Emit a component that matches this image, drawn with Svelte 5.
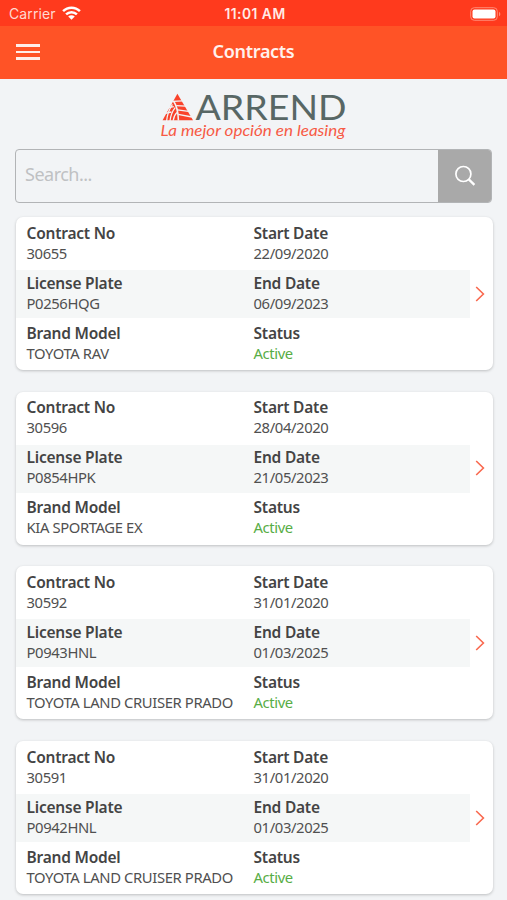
<script lang="ts">
  interface Contract {
    no: string;
    plate: string;
    model: string;
    start: string;
    end: string;
    status: string;
  }

  const contracts: Contract[] = [
    { no: '30655', plate: 'P0256HQG', model: 'TOYOTA RAV', start: '22/09/2020', end: '06/09/2023', status: 'Active' },
    { no: '30596', plate: 'P0854HPK', model: 'KIA SPORTAGE EX', start: '28/04/2020', end: '21/05/2023', status: 'Active' },
    { no: '30592', plate: 'P0943HNL', model: 'TOYOTA LAND CRUISER PRADO', start: '31/01/2020', end: '01/03/2025', status: 'Active' },
    { no: '30591', plate: 'P0942HNL', model: 'TOYOTA LAND CRUISER PRADO', start: '31/01/2020', end: '01/03/2025', status: 'Active' },
  ];

  let query = $state('');
  const visible = $derived(
    contracts.filter((c) => Object.values(c).some((v) => v.toLowerCase().includes(query.toLowerCase())))
  );
</script>

{#snippet field(label: string, value: string, active = false)}
  <div class="field">
    <dt>{label}</dt>
    <dd class:active>{value}</dd>
  </div>
{/snippet}

<div class="screen">
  <div class="status-bar">
    <div class="carrier">
      <span>Carrier</span>
      <svg width="19" height="14" viewBox="0 0 19 14" aria-hidden="true">
        <g fill="none" stroke="#fff" stroke-width="2.5">
          <path d="M1.1 5.2C5.8.5 13.2.5 17.9 5.2" />
          <path d="M4.1 8.4c3-3 7.8-3 10.8 0" />
        </g>
        <path d="M6.2 10.5c1.9-1.8 4.7-1.8 6.6 0L9.5 13.8z" fill="#fff" />
      </svg>
    </div>
    <span class="time">11:01 AM</span>
    <svg class="battery" width="31" height="14" viewBox="0 0 31 14" aria-hidden="true">
      <rect x=".7" y=".7" width="26.6" height="12.6" rx="3.6" fill="none" stroke="#ff8a76" />
      <rect x="2.5" y="2.5" width="23" height="9" rx="2" fill="#fff" />
      <path d="M29 4.7c1.8.8 1.8 3.8 0 4.6z" fill="#ff8a76" />
    </svg>
  </div>

  <header class="nav">
    <button class="menu" type="button" aria-label="Menu">
      <span></span><span></span><span></span>
    </button>
    <h1>Contracts</h1>
  </header>

  <div class="logo">
    <svg width="190" height="55" viewBox="0 0 190 55" role="img" aria-label="Arrend">
      <path d="M18.4 6.8L34 33.2H3.6z" fill="#f9432b" />
      <g fill="none" stroke="#f2f4f6" stroke-width="1.3">
        <path d="M14.6 14.2c3.2 4.4 4.6 11 4.8 19.4" stroke-width="1.6" />
        <path d="M14 14.4l9.4-.5" />
        <path d="M17.2 18.6l9.8.6" />
        <path d="M18.4 22.8l11.2 1.6" />
        <path d="M19.2 27.4l13.6 2.6" />
        <path d="M9 20.6l5.8-.9" />
        <path d="M13.4 17.4C10.4 22 8.2 27.6 7.6 34" />
        <path d="M16.2 20.6C13.4 24 11.6 28.6 11 34" />
        <path d="M18 25.4c-2 2-3.4 4.8-3.8 8.4" />
        <path d="M6.4 26.4l6-1.4" />
      </g>
      <text class="brand" x="36.5" y="33.4" textLength="151" lengthAdjust="spacingAndGlyphs">ARREND</text>
      <text class="slogan" x="1.5" y="48.8" textLength="185" lengthAdjust="spacingAndGlyphs">La mejor opción en leasing</text>
    </svg>
  </div>

  <form class="search" onsubmit={(e) => e.preventDefault()}>
    <input type="text" placeholder="Search..." bind:value={query} />
    <button type="submit" aria-label="Search">
      <svg width="22" height="22" viewBox="0 0 22 22" fill="none" stroke="#fff" aria-hidden="true">
        <circle cx="9.4" cy="9" r="7.5" stroke-width="1.7" />
        <path d="M14.8 14.4l5.6 5.4" stroke-width="2.3" />
      </svg>
    </button>
  </form>

  <main class="list">
    {#each visible as c (c.no)}
      <article class="card">
        <dl>
          <div class="row">
            {@render field('Contract No', c.no)}
            {@render field('Start Date', c.start)}
          </div>
          <div class="row shaded">
            {@render field('License Plate', c.plate)}
            {@render field('End Date', c.end)}
          </div>
          <div class="row">
            {@render field('Brand Model', c.model)}
            {@render field('Status', c.status, c.status === 'Active')}
          </div>
        </dl>
        <svg class="chevron" width="10" height="16" viewBox="0 0 10 16" fill="none" stroke="#f9694f" stroke-width="1.6" aria-hidden="true">
          <path d="M1.2 1l7.2 7-7.2 7" />
        </svg>
      </article>
    {/each}
  </main>
</div>

<style>
  :global(body) {
    margin: 0;
    background: #f2f4f6;
  }
  .screen {
    box-sizing: border-box;
    height: 900px;
    overflow: hidden;
    background: #f2f4f6;
    color: #444;
    font-family: 'Noto Sans', 'Open Sans', sans-serif;
  }

  /* Status bar */
  .status-bar {
    display: grid;
    grid-template-columns: 1fr auto 1fr;
    align-items: center;
    box-sizing: border-box;
    height: 26px;
    padding: 1px 6px 0 9px;
    background: #ff3a1d;
    color: #fff;
    font-family: Inter, sans-serif;
    font-size: 14px;
  }
  .carrier {
    display: flex;
    align-items: center;
    gap: 6px;
    color: #ffd9d1;
    letter-spacing: 0.1px;
  }
  .carrier svg { margin-top: -1px; }
  .time {
    font-size: 13.8px;
    font-weight: 600;
    letter-spacing: 0.5px;
    color: #ffeae5;
  }
  .battery { justify-self: end; }

  /* Navigation */
  .nav {
    display: grid;
    grid-template-columns: 1fr auto 1fr;
    align-items: center;
    box-sizing: border-box;
    height: 53px;
    padding: 0 16px 3px;
    background: #ff5326;
  }
  .menu {
    display: flex;
    flex-direction: column;
    gap: 4px;
    width: 24px;
    padding: 2px 0 0;
    border: 0;
    background: none;
  }
  .menu span {
    height: 2.5px;
    background: #ffeee9;
  }
  h1 {
    margin: 0;
    color: #fff1ed;
    font-size: 18px;
    font-weight: 600;
    line-height: 26px;
    letter-spacing: -0.3px;
  }

  .logo {
    display: flex;
    justify-content: center;
    height: 70px;
    padding-top: 8px;
    box-sizing: border-box;
  }
  .logo svg { overflow: visible; }
  .brand {
    fill: #586765;
    font-family: Lato, sans-serif;
    font-size: 35px;
  }
  .slogan {
    fill: #f75a45;
    font-family: Lato, sans-serif;
    font-size: 14.5px;
    font-style: italic;
  }

  /* Search */
  .search {
    display: flex;
    box-sizing: border-box;
    height: 54px;
    margin: 0 15px;
    border: 1px solid #b2b4b6;
    border-radius: 4px;
    overflow: hidden;
  }
  .search input {
    flex: 1;
    min-width: 0;
    padding: 0 9px 4px;
    border: 0;
    outline: 0;
    background: transparent;
    color: #444;
    font: 18px 'Noto Sans', sans-serif;
    letter-spacing: -0.5px;
  }
  .search input::placeholder { color: #bfc1c3; }
  .search button {
    display: flex;
    align-items: center;
    justify-content: center;
    width: 53px;
    padding: 0;
    border: 0;
    background: #a9a9a9;
  }

  /* Contracts */
  .list {
    display: flex;
    flex-direction: column;
    gap: 21.7px;
    padding: 14px 14px 0 16px;
  }
  .card {
    display: flex;
    align-items: center;
    flex-shrink: 0;
    height: 153px;
    border-radius: 7px;
    background: #fff;
    box-shadow: 0 1px 3px rgba(0, 0, 0, 0.22);
  }
  dl {
    width: 454px;
    margin: 0;
  }
  .row {
    display: grid;
    grid-template-columns: 227px 1fr;
    box-sizing: border-box;
    height: 52px;
    padding: 4.6px 0 0 10.5px;
  }
  .row:first-child {
    height: 53px;
    padding-top: 5.6px;
  }
  .row.shaded {
    height: 48px;
    padding-top: 2.6px;
    background: #f5f7f7;
  }
  dt, dd {
    margin: 0;
    line-height: 20px;
    white-space: nowrap;
  }
  dt {
    font-size: 15.5px;
    font-weight: 600;
    letter-spacing: -0.22px;
  }
  dd {
    font-size: 14.8px;
    letter-spacing: -0.38px;
    color: #505050;
  }
  dd.active { color: #57ad45; }
  .chevron { margin-left: 5px; }
</style>
